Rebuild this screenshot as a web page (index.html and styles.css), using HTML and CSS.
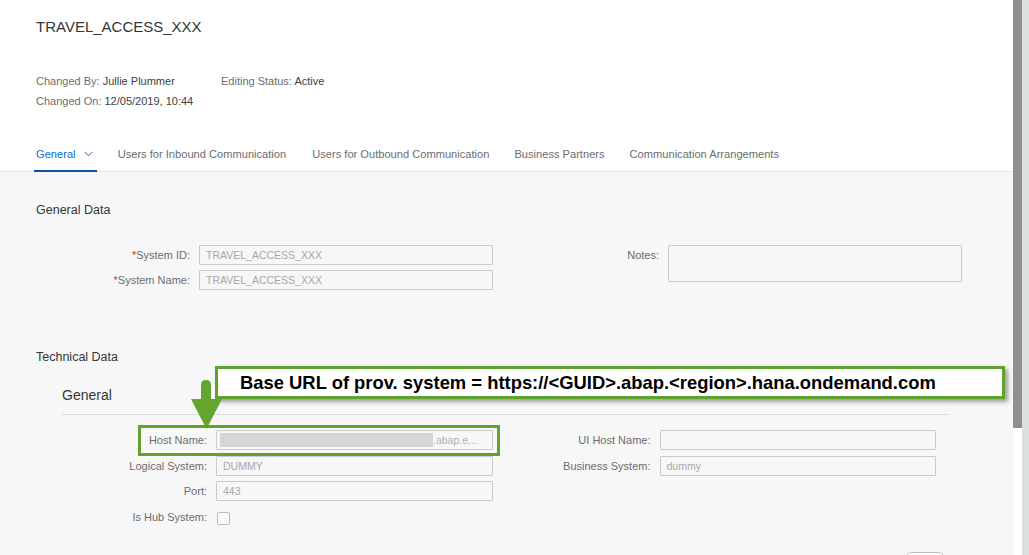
FILE: index.html
```html
<!DOCTYPE html>
<html>
<head>
<meta charset="utf-8">
<link rel="stylesheet" href="styles.css">
</head>
<body>
<div class="window">
  <div class="main">
    <header class="header">
      <h1 class="title">TRAVEL_ACCESS_XXX</h1>
      <div class="meta">
        <div class="meta-col">
          <div class="meta-item"><span class="meta-label">Changed By:</span> <span class="meta-value">Jullie Plummer</span></div>
          <div class="meta-item"><span class="meta-label">Changed On:</span> <span class="meta-value">12/05/2019, 10:44</span></div>
        </div>
        <div class="meta-col">
          <div class="meta-item"><span class="meta-label">Editing Status:</span> <span class="meta-value">Active</span></div>
        </div>
      </div>
      <nav class="tabs">
        <div class="tab active">General <svg class="chev" width="9" height="6" viewBox="0 0 9 6"><path d="M0.5 0.8 L4.5 4.8 L8.5 0.8" fill="none" stroke="#0a6ed1" stroke-width="1"/></svg></div>
        <div class="tab">Users for Inbound Communication</div>
        <div class="tab">Users for Outbound Communication</div>
        <div class="tab">Business Partners</div>
        <div class="tab">Communication Arrangements</div>
      </nav>
    </header>

    <section class="body">
      <h2 class="section-title">General Data</h2>
      <div class="form form-a">
        <div class="col">
          <div class="row"><label class="lbl"><span class="req">*</span>System ID:</label><div class="inp">TRAVEL_ACCESS_XXX</div></div>
          <div class="row"><label class="lbl"><span class="req">*</span>System Name:</label><div class="inp">TRAVEL_ACCESS_XXX</div></div>
        </div>
        <div class="col">
          <div class="row top"><label class="lbl notes-lbl">Notes:</label><div class="inp area"></div></div>
        </div>
      </div>

      <h2 class="section-title tech">Technical Data</h2>
      <div class="panel">
        <div class="panel-head">General</div>
        <div class="form form-b">
          <div class="col">
            <div class="row"><label class="lbl">Host Name:</label><div class="inp host"><span class="blur"></span><span>.abap.e...</span></div></div>
            <div class="row"><label class="lbl">Logical System:</label><div class="inp">DUMMY</div></div>
            <div class="row"><label class="lbl">Port:</label><div class="inp">443</div></div>
            <div class="row"><label class="lbl">Is Hub System:</label><div class="check"></div></div>
          </div>
          <div class="col">
            <div class="row"><label class="lbl">UI Host Name:</label><div class="inp"></div></div>
            <div class="row"><label class="lbl">Business System:</label><div class="inp">dummy</div></div>
          </div>
        </div>
      </div>
      <div class="switch-row"><div class="switch"></div></div>
    </section>

    <div class="callout">Base URL of prov. system = https://&lt;GUID&gt;.abap.&lt;region&gt;.hana.ondemand.com</div>
    <svg class="arrow" width="32" height="52" viewBox="0 0 32 52"><path d="M10 5 Q10 0 15 0 Q20 0 20 5 L20 19 L31 19 L15.5 49 L0 19 L10 19 Z" fill="#63a52e"/></svg>
    <div class="hostbox"></div>
  </div>
  <div class="scrollbar">
    <div class="sb-lane"><div class="sb-thumb"></div></div>
    <div class="sb-track"></div>
  </div>
</div>
</body>
</html>
```

FILE: styles.css
```css
* { box-sizing: border-box; }
html, body { margin: 0; padding: 0; height: 100%; overflow: hidden; }
body {
  font-family: "Liberation Sans", Arial, sans-serif;
  color: #32363a;
  background: #fff;
}
.window { display: flex; height: 555px; }
.main { position: relative; width: 1013px; display: flex; flex-direction: column; background: #fff; }

.header { padding: 17px 0 0 0; background: #fff; }
.title { margin: 0 0 0 36px; font-size: 15px; font-weight: normal; line-height: 20px; color: #32363a; }
.meta { display: flex; margin: 34px 0 0 36px; font-size: 11px; }
.meta-col { display: flex; flex-direction: column; }
.meta-col:first-child { width: 185px; }
.meta-item { line-height: 20px; }
.meta-label { color: #6a6d70; }
.meta-value { color: #3d4145; }

.tabs { display: flex; margin-top: 26px; padding-left: 34px; gap: 22px; border-bottom: 1px solid #e3e3e3; height: 35px; }
.tab { font-size: 11.12px; color: #6a6d70; line-height: 14px; padding: 10px 2px 0 2px; height: 35px; white-space: nowrap; }
.tab:nth-child(2) { margin-left: -3px; }
.tab:nth-child(4), .tab:nth-child(5) { margin-left: -1px; }
.tab.active { color: #0a6ed1; border-bottom: 3px solid #0854a0; padding-right: 4px; margin-bottom: -1px; height: 36px; }
.chev { margin-left: 5px; vertical-align: 1px; }

.body { flex: 1; background: #f7f7f7; padding: 30px 0 0 0; }
.section-title { margin: 0 0 0 36px; font-size: 12.5px; font-weight: normal; line-height: 16px; color: #32363a; }
.section-title.tech { margin-top: 59px; }

.form { display: flex; }
.form-a { margin: 27px 0 0 36px; }
.form-a .col { width: 469px; }
.form-a .lbl { width: 163px; }
.form-a .inp { width: 294px; }
.col { display: flex; flex-direction: column; gap: 5px; }
.row { display: flex; align-items: center; height: 20px; }
.row.top { align-items: flex-start; height: auto; }
.lbl { font-size: 11px; color: #6a6d70; text-align: right; padding-right: 9px; flex: none; line-height: 14px; }
.notes-lbl { padding-top: 3px; }
.req { color: #d32f2f; }
.inp {
  height: 20px; border: 1px solid #cbcbcb; border-radius: 1px; background: #f7f7f7;
  font-size: 10.5px; color: #a7a7a7; padding: 0 6px; line-height: 18px; white-space: nowrap; overflow: hidden;
  flex: none;
}
.inp.area { height: 37px; }

.panel { margin: 21px 0 0 62px; width: 887px; }
.panel-head { font-size: 14px; line-height: 18px; color: #32363a; padding-bottom: 10px; border-bottom: 1px solid #dcdcdc; }
.form-b { margin-top: 15px; }
.form-b .col { width: 444px; gap: 5.5px; }
.form-b .lbl { width: 154px; }
.form-b .inp { width: 277px; }
.form-b .col + .col .inp { width: 276px; }
.inp.host { display: flex; align-items: center; padding: 0 0 0 3px; }
.blur { display: inline-block; width: 213px; height: 14px; background: #d5d5d5; flex: none; }
.host span:last-child { color: #b0b0b0; }
.check { width: 13px; height: 13px; border: 1px solid #bdbdbd; border-radius: 2px; background: #fafafa; margin-left: 1px; margin-top: 4px; }

.switch-row { display: flex; justify-content: flex-end; padding-right: 68px; margin-top: 25px; }
.switch { width: 40px; height: 14px; border: 1px solid #bdbdbd; border-radius: 8px; background: #fff; }

.callout {
  position: absolute; left: 215px; top: 366px; width: 790px; height: 33px;
  border: 3px solid #5fa22c; background: #fff;
  box-shadow: 3px 3px 4px rgba(0,0,0,0.35);
  font-weight: bold; font-size: 18.4px; color: #000; line-height: 27px; padding-left: 22px;
  white-space: nowrap;
}
.arrow { position: absolute; left: 191px; top: 380px; }
.hostbox { position: absolute; left: 138px; top: 425px; width: 362px; height: 31px; border: 3px solid #5fa22c; }

.scrollbar { display: flex; width: 16px; }
.sb-lane { width: 9px; background: #fff; }
.sb-thumb { height: 428px; background: #8f8f8f; }
.sb-track { width: 7px; background: #dcdfe0; }
```
